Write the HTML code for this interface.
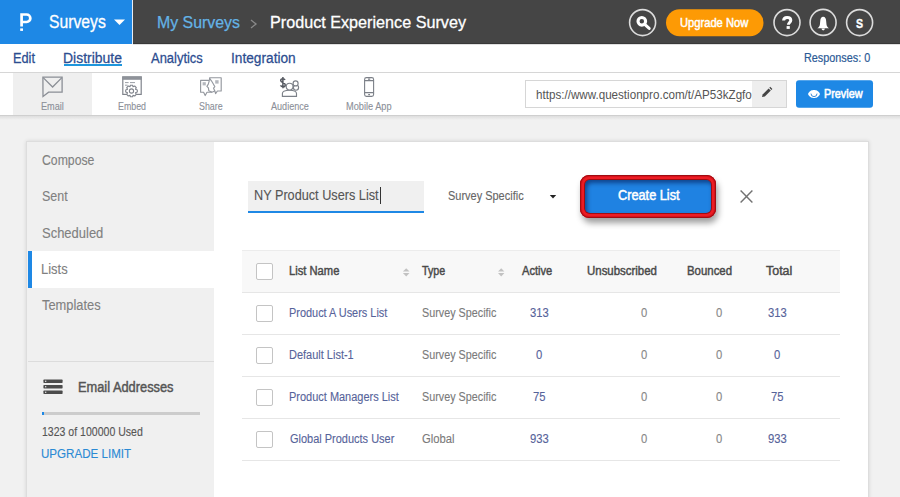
<!DOCTYPE html>
<html><head><meta charset="utf-8">
<style>
html,body{margin:0;padding:0;}
body{width:900px;height:497px;overflow:hidden;position:relative;background:#f1f1f1;font-family:"Liberation Sans",sans-serif;}
.a{position:absolute;}
.t{position:absolute;white-space:nowrap;transform-origin:0 0;font-family:"Liberation Sans",sans-serif;}
svg{position:absolute;overflow:visible;}
</style></head><body>
<!-- header -->
<div class="a" style="left:0;top:0;width:132px;height:44px;background:#1e88e5"></div>
<div class="a" style="left:132px;top:0;width:1px;height:44px;background:#e8eef5"></div>
<div class="a" style="left:133px;top:0;width:767px;height:44px;background:#454545"></div>
<div class="a" style="left:133px;top:42.5px;width:767px;height:1.5px;background:#383838"></div>
<svg style="left:0;top:0" width="900" height="44">
  <path d="M21.6 26.6 V14.5 H26.6 A3.75 3.75 0 0 1 26.6 22 H21.6" fill="none" stroke="#fff" stroke-width="2.7"/>
  <rect x="20.2" y="28.4" width="2.8" height="2.5" fill="#fff"/>
  <path d="M114 19.5 L125 19.5 L119.5 25 Z" fill="#fff"/>
  <path d="M251 20 L256 24 L251 28" fill="none" stroke="#8a8a8a" stroke-width="1.3"/>
  <circle cx="642.6" cy="22.6" r="13" fill="none" stroke="#dcdcdc" stroke-width="1.6"/>
  <circle cx="641.8" cy="21.3" r="3.8" fill="none" stroke="#fff" stroke-width="3.1"/>
  <path d="M645 24.6 L649.2 28.4" stroke="#fff" stroke-width="3" stroke-linecap="round"/>
  <rect x="666" y="9.3" width="97.5" height="27" rx="13.5" fill="#fd9a05"/>
  <circle cx="787" cy="22.6" r="13" fill="none" stroke="#dcdcdc" stroke-width="1.6"/>
  <circle cx="823.1" cy="22.4" r="13" fill="none" stroke="#dcdcdc" stroke-width="1.6"/>
  <circle cx="859.6" cy="22.6" r="13" fill="none" stroke="#dcdcdc" stroke-width="1.6"/>
  <path d="M783.6 20.6 C783.6 18.2 785.2 17.4 787.1 17.4 C789.4 17.4 790.8 18.6 790.8 20.3 C790.8 22.4 788.4 22.6 788.4 24.8" fill="none" stroke="#fff" stroke-width="3"/>
  <rect x="786.6" y="26.1" width="3.2" height="2.8" fill="#fff"/>
  <path d="M823.2 16.8 C821.2 16.8 820.5 18.6 820.3 20.6 L819.9 24.4 C819.7 26.3 818.6 27.4 817.2 28.2 L829.2 28.2 C827.8 27.4 826.7 26.3 826.5 24.4 L826.1 20.6 C825.9 18.6 825.2 16.8 823.2 16.8 Z" fill="#fff"/>
  <path d="M821.5 28.6 A1.7 1.8 0 0 0 824.9 28.6 Z" fill="#fff"/>
</svg>
<!-- nav -->
<div class="a" style="left:0;top:44px;width:900px;height:28px;background:#fff"></div>
<div class="a" style="left:133px;top:44px;width:767px;height:1px;background:rgba(0,0,0,0.12)"></div>
<div class="a" style="left:64px;top:64px;width:58px;height:2px;background:#1e96dc"></div>
<div class="a" style="left:0;top:72px;width:900px;height:1px;background:#d6d6d6"></div>
<!-- toolbar -->
<div class="a" style="left:0;top:73px;width:900px;height:42px;background:#fff"></div>
<div class="a" style="left:13px;top:73px;width:79px;height:42px;background:#efefef"></div>
<div class="a" style="left:0;top:115px;width:900px;height:1px;background:#cfcfcf"></div>
<div class="a" style="left:0;top:116px;width:900px;height:4px;background:linear-gradient(#dedede,#f1f1f1)"></div>
<svg style="left:0;top:0" width="900" height="120">
  <g fill="none" stroke="#8b8f96" stroke-width="1.3" stroke-linejoin="miter">
    <path d="M42.9 77.2 H62.1 V92.2 H48.6 L43 96.4 Z"/>
    <path d="M43.2 77.6 L52.6 87 L61.9 77.6"/>
  </g>
  <g fill="none" stroke="#80848c" stroke-width="1.2">
    <rect x="122.8" y="77" width="18.4" height="17.4"/>
  </g>
  <rect x="122.2" y="76.4" width="19.6" height="3.4" fill="#8e9299"/>
  <path d="M125 82.6 H128.6 M130 82.6 H135 M125 85.2 H127.6" stroke="#9a9ea5" stroke-width="1"/>
  <g transform="translate(131.5 91)">
    <path d="M-1.1 -5.8 H1.1 L1.5 -4.2 L3.2 -5 L4.8 -3.4 L4 -1.7 L5.8 -1.1 V1.1 L4 1.7 L4.8 3.4 L3.2 5 L1.5 4.2 L1.1 5.8 H-1.1 L-1.5 4.2 L-3.2 5 L-4.8 3.4 L-4 1.7 L-5.8 1.1 V-1.1 L-4 -1.7 L-4.8 -3.4 L-3.2 -5 L-1.5 -4.2 Z" fill="#fff" stroke="#80848c" stroke-width="1.1" stroke-linejoin="round"/>
    <circle r="2.1" fill="none" stroke="#80848c" stroke-width="1.1"/>
  </g>
  <g fill="none" stroke="#94989f" stroke-width="1.15" stroke-linejoin="round">
    <path d="M209.4 80.4 H200.6 V92.2 H203.6 L205.2 95.6 L207 92.2 H212"/>
    <path d="M209.4 80.4 L208.2 84.4 L206.9 86.4 L208.4 87.9 L208.8 90.8 L212 92.2"/>
    <path d="M209.6 80.2 V77.7 H221.2 V91 H217.4 L215.6 93.6 L214.8 91"/>
    <path d="M209.6 78.4 L211.4 80.8 L213.2 83.8 L214.8 86.6 L213.6 88.2 L214.8 91 L212 92.2"/>
  </g>
  <rect x="202.6" y="82.2" width="3.2" height="3.2" fill="#b4b7bd"/>
  <rect x="215.2" y="80.2" width="3.4" height="3.4" fill="#b4b7bd"/>
  <path d="M285 80 C284.6 79 283.8 78.7 282.8 78.7 C281.5 78.7 280.7 79.4 280.7 80.5 C280.7 82.9 285.3 82.2 285.3 85 C285.3 86.1 284.4 86.8 283 86.8 C281.8 86.8 281 86.3 280.5 85.4 M282.9 77 V88.2" fill="none" stroke="#555961" stroke-width="1.5"/>
  <g fill="#fff" stroke="#7c8088" stroke-width="1.15">
    <circle cx="296" cy="87.6" r="2.6"/>
    <circle cx="295.6" cy="83.4" r="2.5"/>
    <path d="M282.4 96.4 V93.6 C282.4 91.4 285 90.2 289.5 90.2 C294 90.2 296.5 91.4 296.5 93.6 V96.4 Z"/>
    <circle cx="289.6" cy="86.6" r="3.4"/>
  </g>
  <g fill="none" stroke="#7c8088" stroke-width="1.1">
    <rect x="364.6" y="77.6" width="9" height="18.8" rx="1.8"/>
    <path d="M364.6 80.6 H373.6 M364.6 92.6 H373.6 M368 79.1 H370.2 M368.2 94.6 H370"/>
  </g>
  <g fill="none" stroke="#cfcfcf" stroke-width="1">
  </g>
</svg>
<!-- url box -->
<div class="a" style="left:525px;top:80px;width:260px;height:26px;border:1px solid #d6d6d6;background:#fff;overflow:hidden"></div>
<div class="a" style="left:526px;top:81px;width:226px;height:26px;overflow:hidden"><div style="position:absolute;left:-526px;top:-81px;width:900px;height:120px"><span class="t" style="left:536.20px;top:87.69px;font-size:13px;line-height:13px;color:#555;transform:scaleX(0.8942054197238092)">https://www.questionpro.com/t/AP53kZgfo</span></div></div>
<div class="a" style="left:752px;top:81px;width:34px;height:26px;background:#eeeeee"></div>
<svg style="left:0;top:0" width="900" height="120">
  <path d="M762 97 L762.6 94.4 L768.6 88.4 L770.8 90.6 L764.8 96.6 Z" fill="#444"/>
  <path d="M769.3 87.7 L770.2 86.8 L772.4 89 L771.5 89.9 Z" fill="#444"/>
  <rect x="796" y="80.3" width="77" height="27.4" rx="3" fill="#1e88e5"/>
  <path d="M808 94 C809.5 90.6 812 90 814 90 C816 90 818.5 90.6 820 94 C818.5 97.4 816 98 814 98 C812 98 809.5 97.4 808 94 Z" fill="#fff"/>
  <path d="M811 93.6 A3 3 0 0 0 817 93.6" fill="none" stroke="#3b8ad6" stroke-width="1"/>
</svg>
<!-- card -->
<div class="a" style="left:27px;top:142px;width:841px;height:400px;background:#fff;box-shadow:0 0 0 1px #dddddd, 0 0 4px 1px rgba(0,0,0,0.12)"></div>
<div class="a" style="left:27px;top:142px;width:187px;height:400px;background:#f0f0f0"></div>
<div class="a" style="left:28px;top:251px;width:186px;height:36.5px;background:#fff"></div>
<div class="a" style="left:28px;top:251px;width:4px;height:36.5px;background:#1e88e5"></div>
<div class="a" style="left:28px;top:361px;width:186px;height:1px;background:#dcdcdc"></div>
<svg style="left:0;top:0" width="900" height="497">
  <g fill="#4c4c4c">
    <rect x="43.4" y="379.6" width="19.2" height="3.3" rx="0.6"/>
    <rect x="43.4" y="385.1" width="19.2" height="3.3" rx="0.6"/>
    <rect x="43.4" y="390.6" width="19.2" height="3.3" rx="0.6"/>
  </g>
  <g fill="#f4f4f4"><rect x="45" y="380.7" width="1.3" height="1.1"/><rect x="45" y="386.2" width="1.3" height="1.1"/><rect x="45" y="391.7" width="1.3" height="1.1"/></g>
</svg>
<div class="a" style="left:41.7px;top:412.3px;width:158px;height:3px;background:#cccccc"></div>
<div class="a" style="left:41.7px;top:412.3px;width:2px;height:3px;background:#1e88e5"></div>
<!-- form -->
<div class="a" style="left:248px;top:181px;width:175.5px;height:30px;background:#f0f0f0"></div>
<div class="a" style="left:248px;top:211px;width:175.5px;height:2px;background:#1e88e5"></div>
<div class="a" style="left:379.5px;top:187px;width:1px;height:17px;background:#333"></div>
<svg style="left:0;top:0" width="900" height="497">
  <path d="M549.8 195 L556.2 195 L553 198.4 Z" fill="#222"/>
  <path d="M740.6 190.6 L752.4 202.4 M752.4 190.6 L740.6 202.4" stroke="#727272" stroke-width="1.45"/>
</svg>
<!-- create list button -->
<div class="a" style="left:580px;top:175px;width:136px;height:43px;border-radius:9px;background:#ec1c24;box-shadow:2px 5px 6px rgba(0,0,0,0.38), inset 0 0 0 1px #a00c12, inset 0 0 0 2px #d8141c"></div>
<div class="a" style="left:585px;top:180px;width:126px;height:33px;border-radius:5px;background:#1f82e2;box-shadow:inset 2px 3px 4px rgba(0,10,60,0.5), 0 0 0 1px #a00c12"></div>
<!-- table -->
<div class="a" style="left:242px;top:250px;width:598px;height:42px;background:#f8f8f8"></div>
<div class="a" style="left:242px;top:250px;width:598px;height:1px;background:#ececec"></div>
<div class="a" style="left:242px;top:292px;width:598px;height:1px;background:#e6e6e6"></div>
<div class="a" style="left:242px;top:334px;width:598px;height:1px;background:#e6e6e6"></div>
<div class="a" style="left:242px;top:376px;width:598px;height:1px;background:#e6e6e6"></div>
<div class="a" style="left:242px;top:418px;width:598px;height:1px;background:#e6e6e6"></div>
<div class="a" style="left:242px;top:460px;width:598px;height:1px;background:#e6e6e6"></div>
<div class="a" style="left:256px;top:263px;width:15px;height:15px;border:1px solid #c4c4c4;border-radius:2px;background:#fff"></div>
<div class="a" style="left:256px;top:305px;width:15px;height:15px;border:1px solid #c4c4c4;border-radius:2px;background:#fff"></div>
<div class="a" style="left:256px;top:347px;width:15px;height:15px;border:1px solid #c4c4c4;border-radius:2px;background:#fff"></div>
<div class="a" style="left:256px;top:389px;width:15px;height:15px;border:1px solid #c4c4c4;border-radius:2px;background:#fff"></div>
<div class="a" style="left:256px;top:431px;width:15px;height:15px;border:1px solid #c4c4c4;border-radius:2px;background:#fff"></div>
<svg style="left:0;top:0" width="900" height="497">
  <g fill="#c2c2c2">
    <path d="M402.9 271.6 L406.2 268.2 L409.5 271.6 Z"/><path d="M402.9 273 L406.2 276.4 L409.5 273 Z"/>
    <path d="M498 271.6 L501.2 268.2 L504.4 271.6 Z"/><path d="M498 273 L501.2 276.4 L504.4 273 Z"/>
  </g>
</svg>
<span class="t" style="left:48.70px;top:14.18px;font-size:17.5px;line-height:17.5px;color:#ffffff;font-weight:400;transform:scaleX(0.8981);-webkit-text-stroke:0.3px #ffffff">Surveys</span>
<span class="t" style="left:156.87px;top:14.01px;font-size:17px;line-height:17px;color:#64b3e6;font-weight:400;transform:scaleX(0.9348);-webkit-text-stroke:0.25px #64b3e6">My Surveys</span>
<span class="t" style="left:269.55px;top:14.01px;font-size:17px;line-height:17px;color:#ffffff;font-weight:400;transform:scaleX(0.9514);-webkit-text-stroke:0.3px #ffffff">Product Experience Survey</span>
<span class="t" style="left:679.94px;top:15.79px;font-size:13px;line-height:13px;color:#ffffff;font-weight:400;transform:scaleX(0.8584);-webkit-text-stroke:0.5px #ffffff">Upgrade Now</span>
<span class="t" style="left:856.00px;top:16.82px;font-size:13.2px;line-height:13.2px;color:#ffffff;font-weight:700;transform:scaleX(0.8000);-webkit-text-stroke:0.4px #ffffff">S</span>
<span class="t" style="left:13.18px;top:49.58px;font-size:15.5px;line-height:15.5px;color:#2c4d90;font-weight:400;transform:scaleX(0.8219);-webkit-text-stroke:0.28px #2c4d90">Edit</span>
<span class="t" style="left:63.40px;top:49.58px;font-size:15.5px;line-height:15.5px;color:#2c4d90;font-weight:400;transform:scaleX(0.9006);-webkit-text-stroke:0.28px #2c4d90">Distribute</span>
<span class="t" style="left:150.70px;top:49.58px;font-size:15.5px;line-height:15.5px;color:#2c4d90;font-weight:400;transform:scaleX(0.8350);-webkit-text-stroke:0.28px #2c4d90">Analytics</span>
<span class="t" style="left:230.82px;top:49.58px;font-size:15.5px;line-height:15.5px;color:#2c4d90;font-weight:400;transform:scaleX(0.8838);-webkit-text-stroke:0.28px #2c4d90">Integration</span>
<span class="t" style="left:803.85px;top:52.06px;font-size:12.8px;line-height:12.8px;color:#2b5a96;font-weight:400;transform:scaleX(0.8466);-webkit-text-stroke:0.2px #2b5a96">Responses: 0</span>
<span class="t" style="left:41.40px;top:100.91px;font-size:10.5px;line-height:10.5px;color:#8c9099;font-weight:400;transform:scaleX(0.8718);-webkit-text-stroke:0.12px #8c9099">Email</span>
<span class="t" style="left:117.70px;top:100.91px;font-size:10.5px;line-height:10.5px;color:#8c9099;font-weight:400;transform:scaleX(0.8406);-webkit-text-stroke:0.12px #8c9099">Embed</span>
<span class="t" style="left:199.00px;top:100.91px;font-size:10.5px;line-height:10.5px;color:#8c9099;font-weight:400;transform:scaleX(0.8446);-webkit-text-stroke:0.12px #8c9099">Share</span>
<span class="t" style="left:271.00px;top:100.91px;font-size:10.5px;line-height:10.5px;color:#8c9099;font-weight:400;transform:scaleX(0.8647);-webkit-text-stroke:0.12px #8c9099">Audience</span>
<span class="t" style="left:345.80px;top:100.91px;font-size:10.5px;line-height:10.5px;color:#8c9099;font-weight:400;transform:scaleX(0.8768);-webkit-text-stroke:0.12px #8c9099">Mobile App</span>
<span class="t" style="left:823.63px;top:88.02px;font-size:12.5px;line-height:12.5px;color:#ffffff;font-weight:400;transform:scaleX(0.8665);-webkit-text-stroke:0.6px #ffffff">Preview</span>
<span class="t" style="left:42.20px;top:152.85px;font-size:14px;line-height:14px;color:#808080;font-weight:400;transform:scaleX(0.8748);-webkit-text-stroke:0.12px #808080">Compose</span>
<span class="t" style="left:41.80px;top:189.35px;font-size:14px;line-height:14px;color:#808080;font-weight:400;transform:scaleX(0.8890);-webkit-text-stroke:0.12px #808080">Sent</span>
<span class="t" style="left:41.80px;top:225.65px;font-size:14px;line-height:14px;color:#808080;font-weight:400;transform:scaleX(0.9269);-webkit-text-stroke:0.12px #808080">Scheduled</span>
<span class="t" style="left:40.88px;top:261.95px;font-size:14px;line-height:14px;color:#808080;font-weight:400;transform:scaleX(0.9249);-webkit-text-stroke:0.12px #808080">Lists</span>
<span class="t" style="left:41.80px;top:297.95px;font-size:14px;line-height:14px;color:#808080;font-weight:400;transform:scaleX(0.9184);-webkit-text-stroke:0.12px #808080">Templates</span>
<span class="t" style="left:77.78px;top:380.35px;font-size:14px;line-height:14px;color:#555555;font-weight:400;transform:scaleX(0.9160);-webkit-text-stroke:0.45px #555555">Email Addresses</span>
<span class="t" style="left:42.20px;top:425.72px;font-size:12.5px;line-height:12.5px;color:#555555;font-weight:400;transform:scaleX(0.8429);-webkit-text-stroke:0.12px #555555">1323 of 100000 Used</span>
<span class="t" style="left:41.31px;top:446.99px;font-size:13px;line-height:13px;color:#2a8ad4;font-weight:400;transform:scaleX(0.8914);-webkit-text-stroke:0.12px #2a8ad4">UPGRADE LIMIT</span>
<span class="t" style="left:254.09px;top:188.15px;font-size:14px;line-height:14px;color:#555555;font-weight:400;transform:scaleX(0.9063);-webkit-text-stroke:0.12px #555555">NY Product Users List</span>
<span class="t" style="left:448.20px;top:189.92px;font-size:12.5px;line-height:12.5px;color:#666666;font-weight:400;transform:scaleX(0.8778);-webkit-text-stroke:0.12px #666666">Survey Specific</span>
<span class="t" style="left:617.60px;top:188.15px;font-size:14px;line-height:14px;color:#ffffff;font-weight:400;transform:scaleX(0.9099);-webkit-text-stroke:0.5px #ffffff">Create List</span>
<span class="t" style="left:289.21px;top:265.42px;font-size:12.5px;line-height:12.5px;color:#4a4a4a;font-weight:400;transform:scaleX(0.8949);-webkit-text-stroke:0.45px #4a4a4a">List Name</span>
<span class="t" style="left:422.00px;top:265.42px;font-size:12.5px;line-height:12.5px;color:#4a4a4a;font-weight:400;transform:scaleX(0.8546);-webkit-text-stroke:0.45px #4a4a4a">Type</span>
<span class="t" style="left:522.30px;top:265.42px;font-size:12.5px;line-height:12.5px;color:#4a4a4a;font-weight:400;transform:scaleX(0.8889);-webkit-text-stroke:0.45px #4a4a4a">Active</span>
<span class="t" style="left:587.10px;top:265.42px;font-size:12.5px;line-height:12.5px;color:#4a4a4a;font-weight:400;transform:scaleX(0.9153);-webkit-text-stroke:0.45px #4a4a4a">Unsubscribed</span>
<span class="t" style="left:687.29px;top:265.42px;font-size:12.5px;line-height:12.5px;color:#4a4a4a;font-weight:400;transform:scaleX(0.9133);-webkit-text-stroke:0.45px #4a4a4a">Bounced</span>
<span class="t" style="left:766.00px;top:265.42px;font-size:12.5px;line-height:12.5px;color:#4a4a4a;font-weight:400;transform:scaleX(0.9951);-webkit-text-stroke:0.45px #4a4a4a">Total</span>
<span class="t" style="left:288.73px;top:307.12px;font-size:12.5px;line-height:12.5px;color:#56639a;font-weight:400;transform:scaleX(0.8735);-webkit-text-stroke:0.12px #56639a">Product A Users List</span>
<span class="t" style="left:421.90px;top:307.12px;font-size:12.5px;line-height:12.5px;color:#7a7a7a;font-weight:400;transform:scaleX(0.8627);-webkit-text-stroke:0.12px #7a7a7a">Survey Specific</span>
<span class="t" style="left:529.59px;top:307.12px;font-size:12.5px;line-height:12.5px;color:#56639a;font-weight:400;transform:scaleX(0.9000);-webkit-text-stroke:0.12px #56639a">313</span>
<span class="t" style="left:640.85px;top:307.12px;font-size:12.5px;line-height:12.5px;color:#888888;font-weight:400;transform:scaleX(0.9000);-webkit-text-stroke:0.12px #888888">0</span>
<span class="t" style="left:715.85px;top:307.12px;font-size:12.5px;line-height:12.5px;color:#888888;font-weight:400;transform:scaleX(0.9000);-webkit-text-stroke:0.12px #888888">0</span>
<span class="t" style="left:768.09px;top:307.12px;font-size:12.5px;line-height:12.5px;color:#56639a;font-weight:400;transform:scaleX(0.9000);-webkit-text-stroke:0.12px #56639a">313</span>
<span class="t" style="left:288.72px;top:348.92px;font-size:12.5px;line-height:12.5px;color:#56639a;font-weight:400;transform:scaleX(0.8790);-webkit-text-stroke:0.12px #56639a">Default List-1</span>
<span class="t" style="left:421.90px;top:348.92px;font-size:12.5px;line-height:12.5px;color:#7a7a7a;font-weight:400;transform:scaleX(0.8627);-webkit-text-stroke:0.12px #7a7a7a">Survey Specific</span>
<span class="t" style="left:535.85px;top:348.92px;font-size:12.5px;line-height:12.5px;color:#56639a;font-weight:400;transform:scaleX(0.9000);-webkit-text-stroke:0.12px #56639a">0</span>
<span class="t" style="left:640.85px;top:348.92px;font-size:12.5px;line-height:12.5px;color:#888888;font-weight:400;transform:scaleX(0.9000);-webkit-text-stroke:0.12px #888888">0</span>
<span class="t" style="left:715.85px;top:348.92px;font-size:12.5px;line-height:12.5px;color:#888888;font-weight:400;transform:scaleX(0.9000);-webkit-text-stroke:0.12px #888888">0</span>
<span class="t" style="left:774.35px;top:348.92px;font-size:12.5px;line-height:12.5px;color:#56639a;font-weight:400;transform:scaleX(0.9000);-webkit-text-stroke:0.12px #56639a">0</span>
<span class="t" style="left:288.72px;top:390.72px;font-size:12.5px;line-height:12.5px;color:#56639a;font-weight:400;transform:scaleX(0.8781);-webkit-text-stroke:0.12px #56639a">Product Managers List</span>
<span class="t" style="left:421.90px;top:390.72px;font-size:12.5px;line-height:12.5px;color:#7a7a7a;font-weight:400;transform:scaleX(0.8627);-webkit-text-stroke:0.12px #7a7a7a">Survey Specific</span>
<span class="t" style="left:532.72px;top:390.72px;font-size:12.5px;line-height:12.5px;color:#56639a;font-weight:400;transform:scaleX(0.9000);-webkit-text-stroke:0.12px #56639a">75</span>
<span class="t" style="left:640.85px;top:390.72px;font-size:12.5px;line-height:12.5px;color:#888888;font-weight:400;transform:scaleX(0.9000);-webkit-text-stroke:0.12px #888888">0</span>
<span class="t" style="left:715.85px;top:390.72px;font-size:12.5px;line-height:12.5px;color:#888888;font-weight:400;transform:scaleX(0.9000);-webkit-text-stroke:0.12px #888888">0</span>
<span class="t" style="left:771.22px;top:390.72px;font-size:12.5px;line-height:12.5px;color:#56639a;font-weight:400;transform:scaleX(0.9000);-webkit-text-stroke:0.12px #56639a">75</span>
<span class="t" style="left:289.60px;top:432.52px;font-size:12.5px;line-height:12.5px;color:#56639a;font-weight:400;transform:scaleX(0.8783);-webkit-text-stroke:0.12px #56639a">Global Products User</span>
<span class="t" style="left:421.90px;top:432.52px;font-size:12.5px;line-height:12.5px;color:#7a7a7a;font-weight:400;transform:scaleX(0.8994);-webkit-text-stroke:0.12px #7a7a7a">Global</span>
<span class="t" style="left:529.59px;top:432.52px;font-size:12.5px;line-height:12.5px;color:#56639a;font-weight:400;transform:scaleX(0.9000);-webkit-text-stroke:0.12px #56639a">933</span>
<span class="t" style="left:640.85px;top:432.52px;font-size:12.5px;line-height:12.5px;color:#888888;font-weight:400;transform:scaleX(0.9000);-webkit-text-stroke:0.12px #888888">0</span>
<span class="t" style="left:715.85px;top:432.52px;font-size:12.5px;line-height:12.5px;color:#888888;font-weight:400;transform:scaleX(0.9000);-webkit-text-stroke:0.12px #888888">0</span>
<span class="t" style="left:768.09px;top:432.52px;font-size:12.5px;line-height:12.5px;color:#56639a;font-weight:400;transform:scaleX(0.9000);-webkit-text-stroke:0.12px #56639a">933</span>
</body></html>
